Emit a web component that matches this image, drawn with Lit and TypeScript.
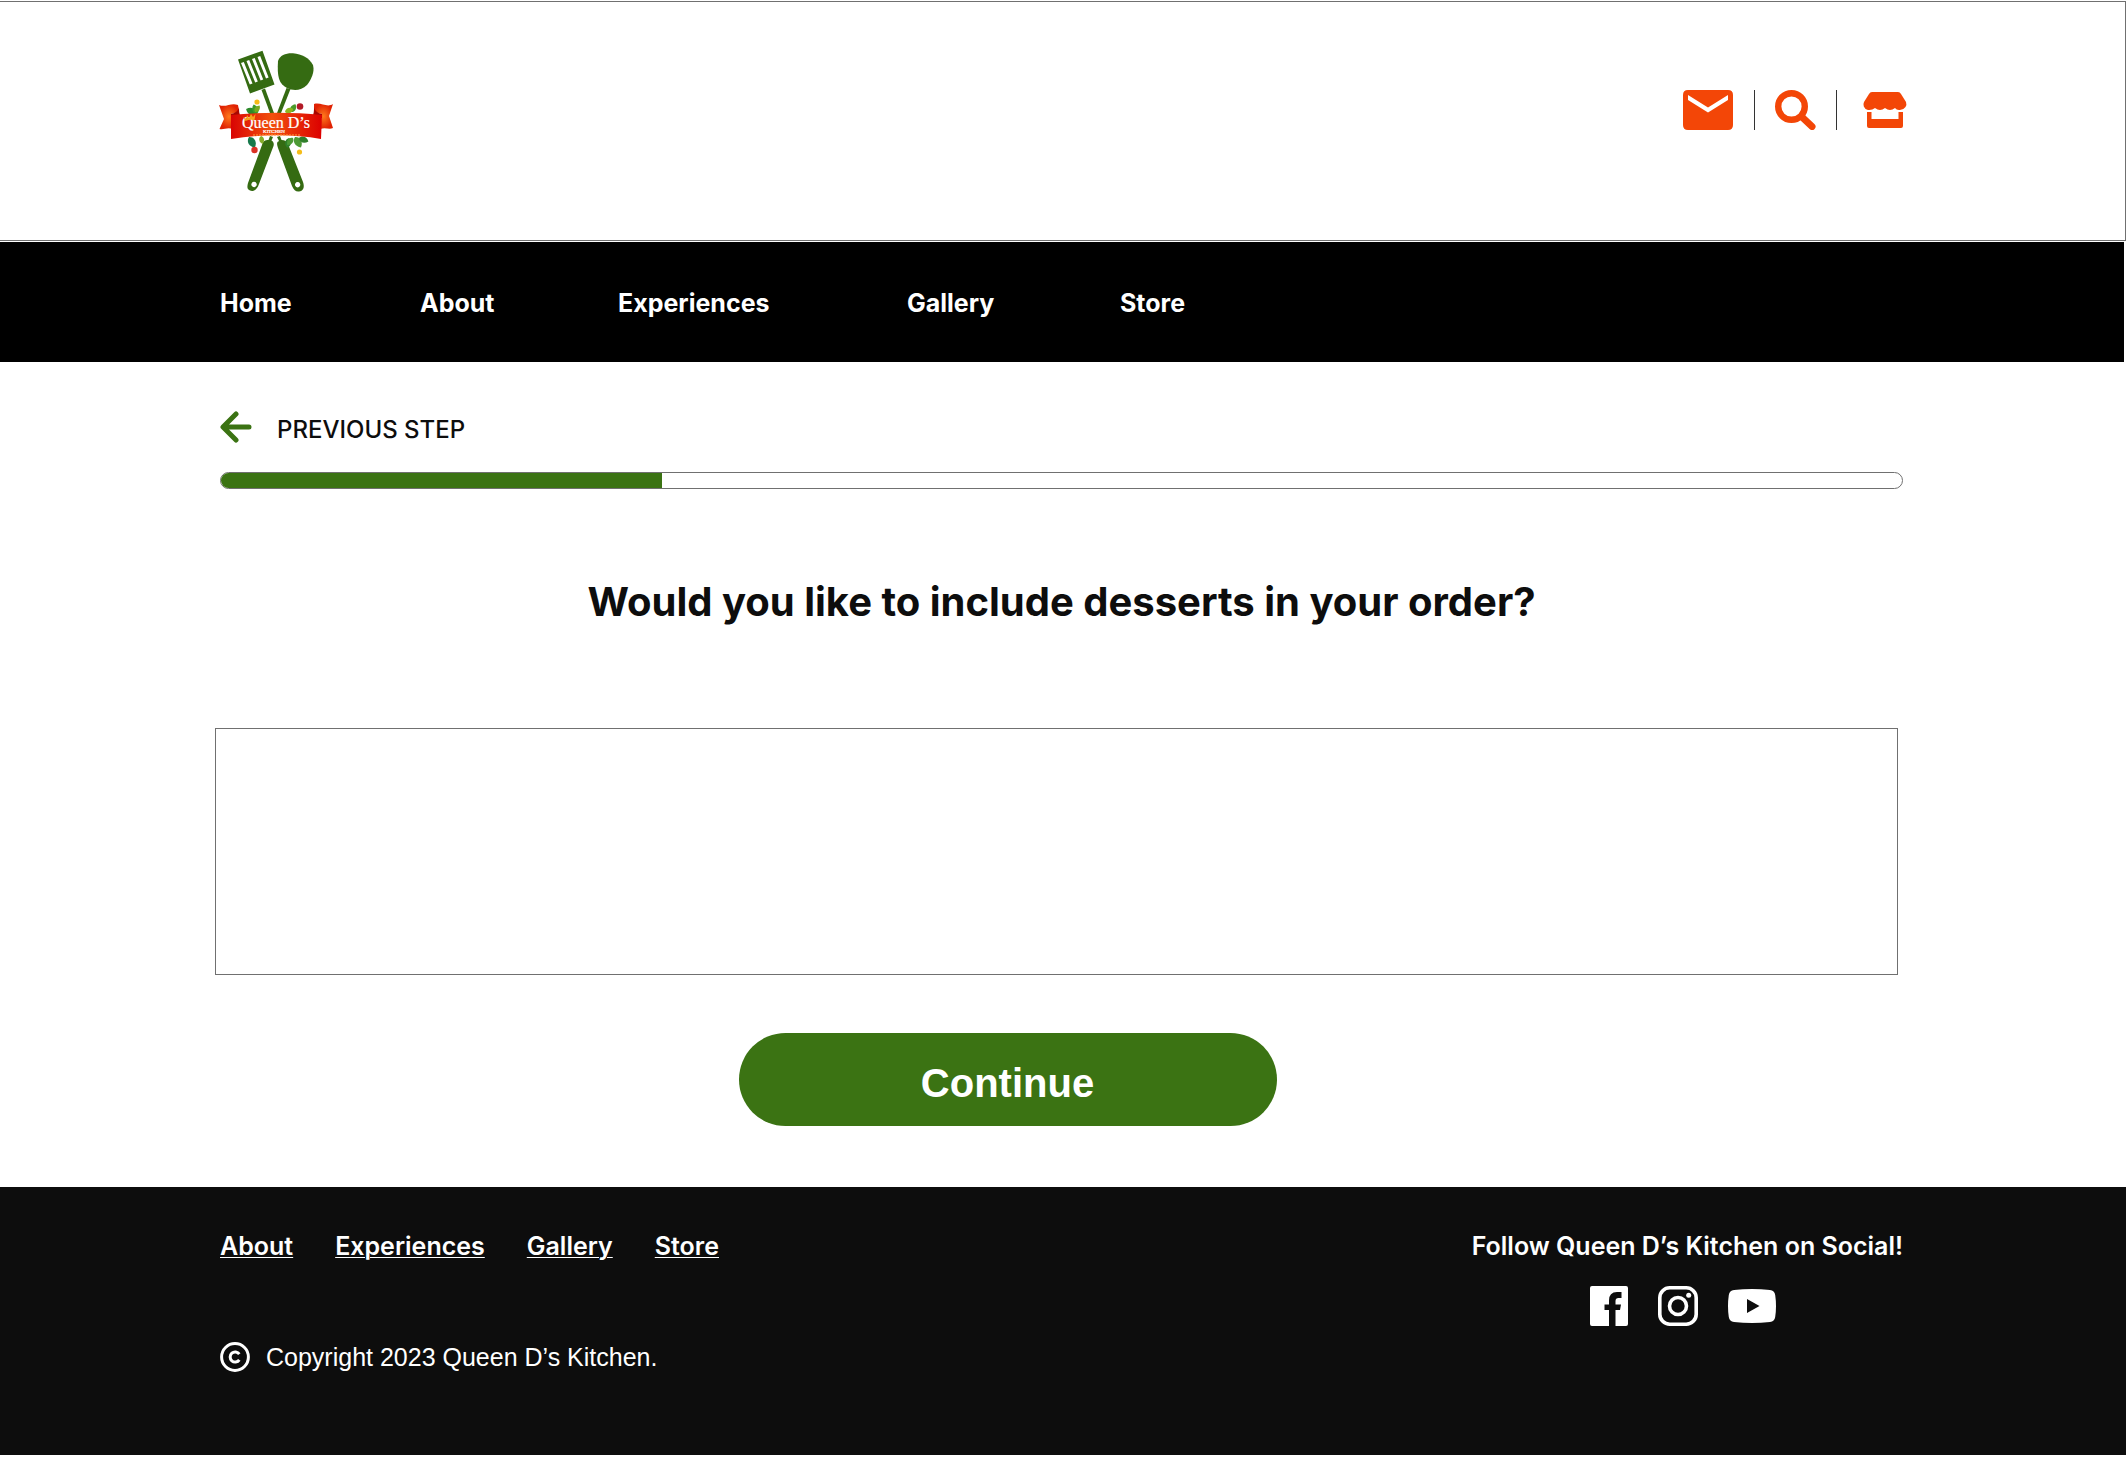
import { LitElement, html, css, svg } from "lit";
import { customElement, property } from "lit/decorators.js";

interface NavLink {
  label: string;
  href: string;
}

const MAIN_LINKS: NavLink[] = [
  { label: "Home", href: "#home" },
  { label: "About", href: "#about" },
  { label: "Experiences", href: "#experiences" },
  { label: "Gallery", href: "#gallery" },
  { label: "Store", href: "#store" },
];

const FOOTER_LINKS: NavLink[] = MAIN_LINKS.slice(1);

const leaf = (x: number, y: number, angle: number, size: number, fill: string) => svg`
  <path transform="translate(${x} ${y}) rotate(${angle}) scale(${size})" fill=${fill}
    d="M0 0 C2 -4 7 -4 10 0 C7 4 2 4 0 0 Z"/>`;

/* Brand mark: crossed spatulas behind a ribbon with the restaurant name. */
@customElement("brand-logo")
export class BrandLogo extends LitElement {
  static styles = css`
    :host {
      display: block;
      line-height: 0;
    }
    .title {
      font-family: "Liberation Serif", serif;
      fill: #fff;
      stroke: #fff;
      stroke-width: 0.2px;
    }
  `;

  render() {
    return html`
      <svg width="116" height="143" viewBox="0 0 116 143" role="img" aria-label="Queen D's Kitchen">
        <defs>
          <linearGradient id="band" x1="0" x2="1">
            <stop offset="0" stop-color="#d90404" />
            <stop offset=".45" stop-color="#f2500d" />
            <stop offset="1" stop-color="#dc0000" />
          </linearGradient>
          <radialGradient id="tail">
            <stop offset="0" stop-color="#ff7a1c" />
            <stop offset="1" stop-color="#e02203" />
          </radialGradient>
        </defs>

        <g fill="#356b12">
          <path
            fill-rule="evenodd"
            d="M19 9.500 L43.500 .8 L55.500 34.500 L31 43.500 Z
               M22 13 L30.800 34.500 L33.500 33.500 L24.800 11.900 Z
               M27.500 11 L36.200 32.500 L38.800 31.500 L30.200 10 Z
               M33 9 L41.600 30.500 L44.200 29.500 L35.700 8 Z
               M38.500 7 L47 28.500 L49.600 27.500 L41.200 6 Z"
          />
          <path d="M42.500 40 L46 38.600 L55 63 L51 63 Z" />
          <path
            d="M59 11 C61 5 67 3 74 3.300 C83 4 90 8 94 15 C96 22 92 30 88 35 C82 41 74 41 68 38
               C60 34 58 27 59 11 Z"
          />
          <path d="M67.500 38 L71.500 39 L62 63 L58 63 Z" />
          <path
            fill-rule="evenodd"
            d="M51 86 L54 87 L52.500 90.500 C55 92 55 94 54.500 96 L40 134 C38 140 34 142 31 140.500
               C28 139.500 28 137 29 133 L43 95 C44 91 46 90 49.500 90 Z
               M35 131.800 a2.700 2.700 0 1 0 .1 0 Z"
          />
          <path
            fill-rule="evenodd"
            d="M58 87 L61 86 L62.500 90 C66 90 67.500 91 69 94 L84 132 C86 138 84 141 80 141.500
               C77 142 75 140 73 136 L59 98 C57.500 93 58 92 60 91 Z
               M78.600 132 a2.700 2.700 0 1 0 .1 0 Z"
          />
        </g>

        ${leaf(38, 64, -155, 1.2, "#2c8a2a")} ${leaf(38, 64, -110, 1, "#3c9a2a")}
        ${leaf(36, 62, -55, 0.8, "#77a81f")} ${leaf(72, 62, -60, 0.9, "#4a9b2c")}
        ${leaf(66, 62, -20, 0.9, "#8cb61f")} ${leaf(30, 87, 60, 1.2, "#16794b")}
        ${leaf(42, 86, 80, 0.8, "#86ad2c")} ${leaf(70, 88, 100, 1, "#2f7f2b")}
        ${leaf(76, 87, 60, 1.2, "#4d9a35")} ${leaf(80, 88, 20, 1, "#2f7f2b")}
        ${leaf(74, 88, 130, 0.9, "#4d9a35")}
        <circle cx="38" cy="52" r="2.600" fill="#f6bb16" />
        <circle cx="81" cy="56.500" r="3.300" fill="#b21a26" />
        <circle cx="35.500" cy="100" r="3.200" fill="#da3124" />
        <circle cx="80.500" cy="102" r="2.600" fill="#f5bd19" />

        <g fill="url(#tail)">
          <path d="M0 55 C7 58 12 52 19 55 L20 62 L12 64 L14 79 C8 77 5 80 .5 79 L5 69 Z" />
          <path d="M114 54 C108 58 102 52 95 54 L95 62 L103 64 L101 79 C107 77 110 80 114 78 L110 66 Z" />
        </g>
        <path d="M12 64 C17 63 20 60 20 56 C20 61 20 64 22 67 L12 68 Z" fill="#a80600" />
        <path d="M103 64 C98 63 95 60 95 56 C95 61 95 64 93 67 L103 68 Z" fill="#a80600" />
        <path
          fill="url(#band)"
          d="M12 65 C42 62 74 62 103 65 L102 89 C74 84 42 84 12 89 Z"
        />
        <text class="title" x="57" y="78" text-anchor="middle" font-size="16">Queen D’s</text>
        <path d="M24 67 l3 2 1-4 2 3 2-4 2 3 2.500-3 -1 6 q-5 -1 -9 1 z" fill="#f5a21c" />
        <text class="title" x="55" y="83" text-anchor="middle" font-size="5">KITCHEN</text>
        <path d="M34 85 H82" stroke="#ff9a3c" stroke-width="1" stroke-dasharray="2 1" />
      </svg>
    `;
  }
}

/* Order progress, drawn as a filled pill; value is a fraction from 0 to 1. */
@customElement("step-progress")
export class StepProgress extends LitElement {
  @property({ type: Number }) value = 0;

  static styles = css`
    :host {
      display: block;
    }
    .track {
      box-sizing: border-box;
      height: 17px;
      border: 1px solid #707070;
      border-radius: 9px;
      overflow: hidden;
      background: #fff;
    }
    .fill {
      height: 100%;
      background: #3b7313;
    }
  `;

  render() {
    const percent = this.value * 100;
    return html`
      <div
        class="track"
        role="progressbar"
        aria-label="Order progress"
        aria-valuemin="0"
        aria-valuemax="100"
        aria-valuenow=${Math.round(percent)}
      >
        <div class="fill" style="width:${percent}%"></div>
      </div>
    `;
  }
}

@customElement("app-root")
export class AppRoot extends LitElement {
  static styles = css`
    :host {
      display: flex;
      flex-direction: column;
      min-height: 100vh;
      box-sizing: border-box;
      padding-top: 1px;
      padding-bottom: 4px;
      background: #fff;
      color: #0d0d0d;
      font-family: Inter, "Liberation Sans", sans-serif;
      font-size: 25px;
      line-height: 32px;
      --gutter: 220px;
    }
    a {
      color: inherit;
      text-decoration: none;
    }
    svg {
      display: block;
    }
    .header {
      display: flex;
      justify-content: space-between;
      align-items: flex-start;
      box-sizing: border-box;
      height: 240px;
      padding: 48px 218px 0 219px;
      border: 1px solid #707070;
      border-left: 0;
    }
    .tools {
      display: flex;
      align-items: center;
      height: 40px;
      margin-top: 40px;
      color: #f34607;
    }
    .divider {
      width: 1px;
      height: 40px;
      background: #333;
    }
    .mail {
      margin-right: 21px;
    }
    .search {
      margin: 0 20px;
    }
    .shop {
      margin-left: 26px;
    }
    .nav {
      display: grid;
      grid-template-columns: 200px 198px 289px 213px auto;
      align-items: center;
      box-sizing: border-box;
      height: 120px;
      margin: 1px 2px 0 0;
      padding: 2px 0 0 var(--gutter);
      background: #000;
      color: #fff;
      font-weight: 700;
    }
    .main {
      display: flex;
      flex-direction: column;
      flex: 1;
      padding: 48px 223px 61px var(--gutter);
    }
    .back {
      display: flex;
      align-items: center;
      align-self: flex-start;
      gap: 25px;
      font-size: 24px;
      font-weight: 500;
      line-height: 40px;
    }
    .back svg {
      margin-bottom: 6px;
    }
    .progress {
      margin-top: 22px;
    }
    .question {
      margin: 85px 0 0;
      font-size: 40px;
      font-weight: 700;
      line-height: 56px;
      text-align: center;
    }
    .answer {
      box-sizing: border-box;
      width: 100%;
      height: 247px;
      margin: 98px 0 0 -5px;
      padding: 16px;
      border: 1px solid #707070;
      border-radius: 0;
      background: #fff;
      font: inherit;
      resize: none;
      outline: none;
    }
    .continue {
      align-self: center;
      width: 538px;
      height: 93px;
      margin: 58px 108px 0 0;
      padding: 8px 0 0;
      border: 0;
      border-radius: 47px;
      background: #3b7313;
      color: #fff;
      font-family: "Liberation Sans", sans-serif;
      font-size: 40px;
      font-weight: 700;
      cursor: pointer;
    }
    .footer {
      display: flex;
      justify-content: space-between;
      box-sizing: border-box;
      min-height: 268px;
      padding: 43px 223px 65px var(--gutter);
      background: #0d0d0d;
      color: #fff;
    }
    .links {
      display: flex;
      gap: 42px;
      font-weight: 600;
    }
    .links a {
      text-decoration: underline;
      text-decoration-thickness: 1px;
      text-underline-offset: 2px;
    }
    .legal {
      display: flex;
      align-items: center;
      gap: 16px;
      margin: 79px 0 0;
      font-family: "Liberation Sans", sans-serif;
    }
    .follow {
      margin: 0;
      font-weight: 600;
    }
    .icons {
      display: flex;
      align-items: center;
      justify-content: center;
      gap: 30px;
      margin-top: 24px;
      padding-right: 9px;
    }
  `;

  render() {
    return html`
      <header class="header">
        <a href="#home" aria-label="Queen D's Kitchen home"><brand-logo></brand-logo></a>
        <div class="tools">
          <a class="mail" href="#contact" aria-label="Mail">
            <svg width="50" height="40" viewBox="0 0 50 40" fill="currentColor">
              <path
                fill-rule="evenodd"
                d="M5 0 H45 Q50 0 50 5 V35 Q50 40 45 40 H5 Q0 40 0 35 V5 Q0 0 5 0 Z
                   M5 5 V10 L25 22.500 L45 10 V5 L25 17.500 Z"
              />
            </svg>
          </a>
          <span class="divider"></span>
          <a class="search" href="#search" aria-label="Search">
            <svg width="41" height="40" viewBox="0 0 41 40" fill="none" stroke="currentColor">
              <circle cx="16.500" cy="16.500" r="13.300" stroke-width="6.400" />
              <path d="M28 28 L37 36.500" stroke-width="7" stroke-linecap="round" />
            </svg>
          </a>
          <span class="divider"></span>
          <a class="shop" href="#store" aria-label="Store">
            <svg width="44" height="36" viewBox="0 0 44 36" fill="currentColor">
              <path
                d="M9 0 H35 Q37 0 38 2 L43 10 Q44 13 42.500 15 Q40 18.500 36 18 Q33.500 18 32 16
                   Q27 20 22 16 Q17 20 12 16 Q9 18.500 5 18 Q2 17.500 .8 14.500 Q0 12 1 10 L6 2 Q7 0 9 0 Z"
              />
              <path d="M4 20 H8.500 V27 H35.500 V20 H40 V34 Q40 36 38 36 H6 Q4 36 4 34 Z" />
            </svg>
          </a>
        </div>
      </header>

      <nav class="nav" aria-label="Main">
        ${MAIN_LINKS.map((l) => html`<a href=${l.href}>${l.label}</a>`)}
      </nav>

      <main class="main">
        <a class="back" href="#previous">
          <svg width="32" height="32" viewBox="0 0 32 32" fill="none" stroke="#3b7313" stroke-width="5"
            stroke-linecap="round" stroke-linejoin="round">
            <path d="M16 3 L3 16 L16 29 M4 16 H29" />
          </svg>
          PREVIOUS STEP
        </a>
        <step-progress class="progress" .value=${0.2625}></step-progress>
        <h1 class="question" id="question">Would you like to include desserts in your order?</h1>
        <textarea class="answer" aria-labelledby="question"></textarea>
        <button class="continue" type="button">Continue</button>
      </main>

      <footer class="footer">
        <div>
          <nav class="links" aria-label="Footer">
            ${FOOTER_LINKS.map((l) => html`<a href=${l.href}>${l.label}</a>`)}
          </nav>
          <p class="legal">
            <svg width="30" height="30" viewBox="0 0 30 30" fill="none" stroke="#fff" stroke-width="3">
              <circle cx="15" cy="15" r="13.400" />
              <path d="M19.300 12.200 A5 5 0 1 0 19.300 17.800" />
            </svg>
            Copyright 2023 Queen D’s Kitchen.
          </p>
        </div>
        <div>
          <p class="follow">Follow Queen D’s Kitchen on Social!</p>
          <div class="icons">
            <a href="#facebook" aria-label="Facebook">
              <svg width="38" height="40" viewBox="0 0 38 40" fill="#fff">
                <path
                  d="M2 0 H36 Q38 0 38 2 V38 Q38 40 36 40 H25.500 V24 H30 L31 18.500 H25.500 V15
                     Q25.500 12 28.500 12 H31.500 V6 H27 Q19 6 19 14.500 V18.500 H14.500 V24 H19 V40 H2
                     Q0 40 0 38 V2 Q0 0 2 0 Z"
                />
              </svg>
            </a>
            <a href="#instagram" aria-label="Instagram">
              <svg width="40" height="40" viewBox="0 0 40 40" fill="none" stroke="#fff">
                <rect x="1.800" y="1.800" width="36.400" height="36.400" rx="10" stroke-width="3.600" />
                <circle cx="20" cy="20" r="8.500" stroke-width="3.600" />
                <circle cx="30.700" cy="9.300" r="2.500" fill="#fff" stroke="none" />
              </svg>
            </a>
            <a href="#youtube" aria-label="YouTube">
              <svg width="48" height="34" viewBox="0 0 48 34" fill="#fff">
                <path
                  fill-rule="evenodd"
                  d="M6 1 Q24 -1 42 1 Q46.500 1.500 47.200 6 Q48.800 17 47.200 28 Q46.500 32.500 42 33
                     Q24 35 6 33 Q1.500 32.500 .8 28 Q-.8 17 .8 6 Q1.500 1.500 6 1 Z
                     M19 10 V24 L31.500 17 Z"
                />
              </svg>
            </a>
          </div>
        </div>
      </footer>
    `;
  }
}
